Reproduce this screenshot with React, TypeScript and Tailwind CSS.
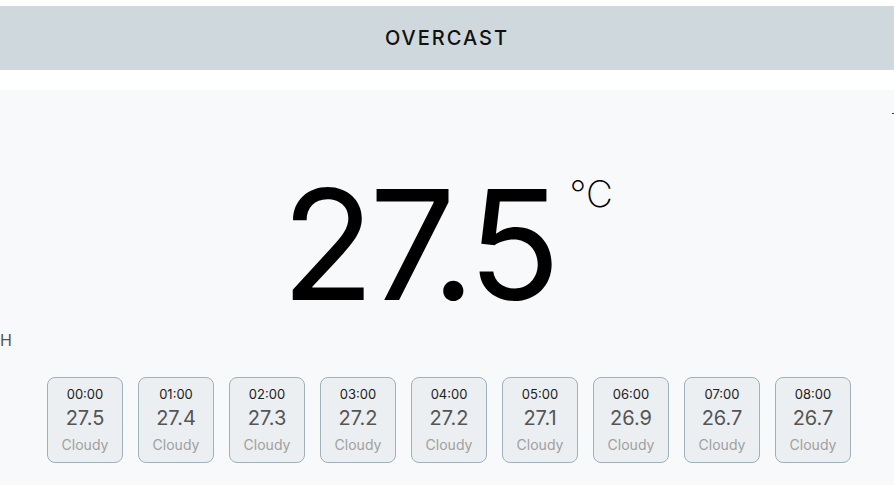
const hours = [
  { time: "00:00", temp: "27.5" },
  { time: "01:00", temp: "27.4" },
  { time: "02:00", temp: "27.3" },
  { time: "03:00", temp: "27.2" },
  { time: "04:00", temp: "27.2" },
  { time: "05:00", temp: "27.1" },
  { time: "06:00", temp: "26.9" },
  { time: "07:00", temp: "26.7" },
  { time: "08:00", temp: "26.7" },
];

const HourCard = ({ time, temp }: { time: string; temp: string }) => (
  <div className="flex h-[86px] w-[76px] flex-col items-center rounded-lg border border-[#9fb1ba] bg-[#eceff1] pt-[7px]">
    <p className="text-[13px] leading-[18px] text-[#212121]">{time}</p>
    <p className="mt-[1px] text-[20px] leading-[28px] text-[#555555]">{temp}</p>
    <p className="mt-[3px] text-[14px] leading-[20px] text-[#a0a0a0]">Cloudy</p>
  </div>
);

const App = () => {
  return (
    <div className="min-h-screen bg-white pt-[6px] font-['Inter',sans-serif]">
      <header className="flex h-16 items-center justify-center bg-[#cfd8dc]">
        <h1 className="text-[20px] font-medium tracking-[0.1em] text-[#111111]">OVERCAST</h1>
      </header>

      <main className="mt-5 h-[395px] overflow-hidden bg-[#f8f9fb]">
        <div className="flex h-[24px] justify-end pt-[23px]">
          <span className="h-[1px] w-[2px] bg-[#333333]" />
        </div>

        <div className="mt-[54px] flex items-start justify-center">
          <span className="text-[153px] leading-none tracking-[-0.035em] text-black">27.5</span>
          <span className="ml-[14px] mt-[7px] text-[37px] font-extralight leading-none text-black">°C</span>
        </div>

        <p className="mt-[7px] text-base leading-6 text-[#555555]">H</p>

        <div className="mt-[25px] flex justify-center gap-[15px] pl-[4px]">
          {hours.map((h) => (
            <HourCard key={h.time} time={h.time} temp={h.temp} />
          ))}
        </div>
      </main>
    </div>
  );
};

export default App;
